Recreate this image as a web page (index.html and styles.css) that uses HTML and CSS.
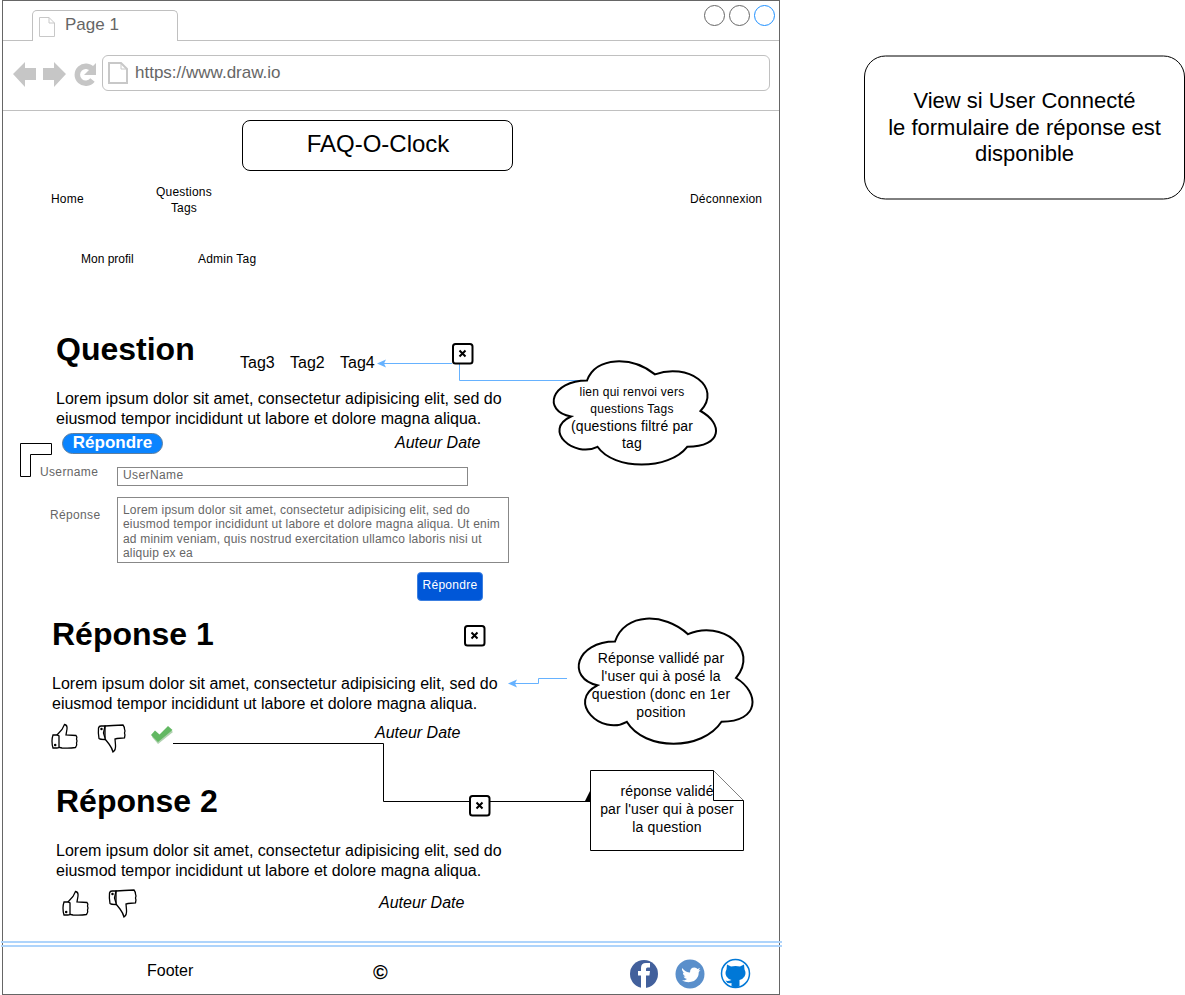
FILE: index.html
```html
<!DOCTYPE html>
<html lang="fr">
<head>
<meta charset="utf-8">
<title>FAQ-O-Clock</title>
<link rel="stylesheet" href="styles.css">
</head>
<body>
<div class="canvas">
  <div class="window">
    <div class="tab-row">
      <div class="tab">
        <svg class="page-icon" width="16" height="20" viewBox="0 0 16 20"><path d="M.5.5H10L15.5 6V19.5H.5Z M10 .5V6H15.5" fill="#fff" stroke="#c8c8c8"/></svg>
        <span class="tab-label">Page 1</span>
      </div>
      <div class="win-buttons">
        <span class="win-btn"></span><span class="win-btn"></span><span class="win-btn win-btn-active"></span>
      </div>
    </div>
    <div class="address-row">
      <svg class="nav-icons" width="99" height="36" viewBox="0 0 99 36">
        <path d="M10 19 22 7V13H33V25H22V32Z" fill="#c6c6c6"/>
        <path d="M63 19 51 7V13H40V25H51V32Z" fill="#c6c6c6"/>
        <path d="M89.5 14.5A8.5 8.5 0 1 0 89.5 25" fill="none" stroke="#c6c6c6" stroke-width="5.5"/>
        <path d="M93 8V20H81Z" fill="#c6c6c6"/>
      </svg>
      <div class="address-bar">
        <svg class="page-icon" width="20" height="22" viewBox="0 0 20 22"><path d="M1 1H13L19 7V21H1Z" fill="#fff" stroke="#c8c8c8" stroke-width="2"/><path d="M13 1V7H19" fill="none" stroke="#c8c8c8"/></svg>
        <span class="address-text">https://www.draw.io</span>
      </div>
    </div>
  </div>

  <svg class="overlay" width="1185" height="995" viewBox="0 0 1185 995">
    <defs>
      <g id="close-box">
        <rect x="1" y="1" width="19.5" height="19.5" rx="2.5" fill="#fff" stroke="#000" stroke-width="2"/>
        <path d="M7.5 7.500 13.500 13.500M13.500 7.500 7.500 13.500" stroke="#000" stroke-width="2"/>
      </g>
      <g id="thumb-up" fill="#fff" stroke="#000" stroke-width="1.3">
        <path d="M7 12 12 6.5 14.5 1.5Q17.5 2 17 6L16 12 26 12.5Q27.5 14 26.5 16 27.5 18 26.5 20 27.5 22 25.5 24.5 20 25.5 12 25L7 24Z"/>
        <path d="M7 12H3Q2 15 2 18 2 22 3 25H7Q9 25 9 24V13Z"/>
        <circle cx="5.2" cy="22" r=".6" fill="#000"/>
      </g>
      <g id="thumb-down" fill="#fff" stroke="#000" stroke-width="1.3">
        <path d="M8 2 16 1.5 26 1Q27.5 3 27.5 5 28.5 7 27.5 9 28.5 11 27.5 14L20 14.5 18 15 18.5 21Q19 26 16 28 15 24 12 20L8 15Z"/>
        <path d="M8 2H4Q2 2 1.5 4 1 9 2 14.5 3 15.5 8 15.5V14L6.5 9Z"/>
        <circle cx="4.5" cy="5" r=".6" fill="#000"/>
      </g>
    </defs>

    <rect class="shape-box" x="242.5" y="120.5" width="270" height="50" rx="7.5"/>
    <rect class="shape-box" x="864.5" y="56" width="320" height="143" rx="21"/>

    <path class="blue-line" d="M452 363.500H384"/>
    <path class="blue-head" d="M377 363.500 386 359.500 384 363.500 386 367.500Z"/>
    <path class="blue-line" d="M459.500 364V380.500H590"/>
    <path class="blue-line" d="M567 678.500H538.500V683.500H515"/>
    <path class="blue-head" d="M508 683.500 517 679.500 515 683.500 517 687.500Z"/>

    <use href="#close-box" x="452" y="343"/>
    <use href="#close-box" x="464" y="625"/>

    <path class="black-line" d="M173 743.500H383.500V801.500H590"/>
    <path d="M585 801 590 791 592 801Z"/>
    <use href="#close-box" x="469" y="795"/>

    <path class="shape-line" d="M20.500 443.500H51.500V454.500H30.500V476.500H20.500Z"/>

    <path class="cloud" d="M587 380.500C551 380.500 542 411 571 416.500C542 430 574 458.500 597.500 446.800C614 470.500 668.800 470.500 687.200 446.800C723 446.800 723 423.200 700.500 411C723 386.600 687.200 362.200 655 374.400C632 356.100 596 356.100 587 380.500Z"/>
    <path class="cloud" d="M615 641.500C575.800 641.500 566 678 597.400 685.300C566 701.400 601.300 736.400 626.800 721.800C644.400 751 702.400 751 721.500 721.800C760 721.800 760 692.600 736 678C760 648.800 721.500 619.600 688 634.200C664 612.300 624.800 612.300 615 641.500Z"/>

    <path class="shape-line" d="M590.500 770.500H713.500L743.500 800.500V850.500H590.500Z"/>
    <path class="shape-line" d="M713.500 770.500V800.500H743.500"/>

    <use href="#thumb-up" x="50" y="723"/>
    <use href="#thumb-down" x="97" y="724"/>
    <use href="#thumb-up" x="61" y="890"/>
    <use href="#thumb-down" x="108" y="889"/>

    <path d="M152 736 158 743 173 731 168.500 727 160 736.500 155 731.500Z" fill="#4f9a4f" opacity=".45" transform="translate(0 1)"/>
    <path d="M151 735 158 742 172.500 730 168 726 159.500 734.500 155 730.500Z" fill="#62b862"/>

    <path class="footer-line" d="M1 942H782M1 946H782"/>

    <circle cx="644" cy="974" r="14" fill="#42609c"/>
    <path d="M641 988V975.500H638V971H641V968Q641 963 646 963H650V967.500H647.500Q646 967.500 646 969V971H650L649.400 975.500H646V988Z" fill="#fff"/>
    <circle cx="690" cy="974" r="14.500" fill="#5a8fcb"/>
    <path d="M682 968Q686 972.500 690 972.500 690 967.500 694.500 967.500 696.500 967.500 697.500 969L700 968 698.500 970.500 700.500 970 698.800 972Q698.800 978 694 981 688 983.500 682 980.500 685 980.500 687 979 684.500 978.500 683.500 976.500H685.500Q682.800 975.300 682.800 972.500L684.500 973Q681.500 971 682 968Z" fill="#fff"/>
    <circle cx="735.500" cy="973.500" r="14" fill="#fff" stroke="#0078d7" stroke-width="1.500"/>
    <path d="M727 964.500 731 966.500Q735.500 965.500 740 966.500L744 964.500 744.500 969.500Q746.500 973 744.500 976.500 742.500 979.500 739.500 980V986.500Q735.500 988 731.500 986.500V983Q727 984 725.500 980.500 727.500 981.500 731.500 980 728.500 979.500 726.500 976.500 724.500 973 726.500 969.500Z" fill="#0078d7"/>
  </svg>

  <div class="node title">FAQ-O-Clock</div>
  <div class="node view-note">View si User Connecté<br>le formulaire de réponse est<br>disponible</div>

  <div class="node nav nav-home">Home</div>
  <div class="node nav nav-questions">Questions<br>Tags</div>
  <div class="node nav nav-logout">Déconnexion</div>
  <div class="node nav nav-profile">Mon profil</div>
  <div class="node nav nav-admin">Admin Tag</div>

  <h1 class="node heading h-question">Question</h1>
  <div class="node tag tag-3">Tag3</div>
  <div class="node tag tag-2">Tag2</div>
  <div class="node tag tag-4">Tag4</div>
  <p class="node lorem lorem-q">Lorem ipsum dolor sit amet, consectetur adipisicing elit, sed do<br>eiusmod tempor incididunt ut labore et dolore magna aliqua.</p>
  <div class="node pill">Répondre</div>
  <div class="node author author-q">Auteur Date</div>

  <div class="node field-label label-user">Username</div>
  <div class="node input">UserName</div>
  <div class="node field-label label-reply">Réponse</div>
  <div class="node textarea">Lorem ipsum dolor sit amet, consectetur adipisicing elit, sed do eiusmod tempor incididunt ut labore et dolore magna aliqua. Ut enim ad minim veniam, quis nostrud exercitation ullamco laboris nisi ut aliquip ex ea</div>
  <div class="node submit">Répondre</div>

  <h2 class="node heading h-r1">Réponse 1</h2>
  <p class="node lorem lorem-r1">Lorem ipsum dolor sit amet, consectetur adipisicing elit, sed do<br>eiusmod tempor incididunt ut labore et dolore magna aliqua.</p>
  <div class="node author author-r1">Auteur Date</div>

  <h2 class="node heading h-r2">Réponse 2</h2>
  <p class="node lorem lorem-r2">Lorem ipsum dolor sit amet, consectetur adipisicing elit, sed do<br>eiusmod tempor incididunt ut labore et dolore magna aliqua.</p>
  <div class="node author author-r2">Auteur Date</div>

  <div class="node cloud-text cloud-text-a"><div class="small">lien qui renvoi vers<br>questions Tags</div>(questions filtré par<br>tag</div>
  <div class="node cloud-text cloud-text-b">Réponse vallidé par<br>l'user qui à posé la<br>question (donc en 1er<br>position</div>
  <div class="node cloud-text note-text">réponse validé<br>par l'user qui à poser<br>la question</div>

  <div class="node footer-text">Footer</div>
  <div class="node copyright">©</div>
</div>
</body>
</html>
```
FILE: styles.css
```css
* { box-sizing: border-box; }
html, body { margin: 0; padding: 0; background: #fff; }
body { font-family: "Liberation Sans", Arial, sans-serif; color: #000; }

.canvas { position: relative; width: 1185px; height: 995px; overflow: hidden; }

.window { margin-left: 2px; width: 778px; height: 995px; border: 1px solid #666; }

.tab-row { display: flex; align-items: flex-end; justify-content: space-between; height: 40px; border-bottom: 1px solid #c0c0c0; padding-left: 29px; }
.tab { display: flex; align-items: flex-start; width: 146px; height: 31px; margin-bottom: -1px; padding: 6px 0 0 6px; background: #fff; border: 1px solid #c0c0c0; border-bottom: none; border-radius: 5px 5px 0 0; }
.tab-label { margin-left: 10px; font-size: 17px; line-height: 16px; color: #666; }
.page-icon { flex: none; }
.win-buttons { display: flex; gap: 4px; align-self: flex-start; margin: 4px 4px 0 0; }
.win-btn { width: 21px; height: 21px; border: 1px solid #666; border-radius: 50%; }
.win-btn-active { border-color: #1e90ff; }

.address-row { display: flex; align-items: flex-start; height: 70px; padding-top: 14px; border-bottom: 1px solid #c0c0c0; }
.nav-icons { flex: none; }
.address-bar { display: flex; align-items: center; width: 668px; height: 36px; padding-left: 5px; border: 1px solid #c0c0c0; border-radius: 6px; }
.address-text { margin-left: 7px; font-size: 17px; color: #666; }

.overlay { position: absolute; left: 0; top: 0; }
.shape-box, .shape-line { fill: #fff; stroke: #000; stroke-width: 1; }
.blue-line { fill: none; stroke: #66b2ff; stroke-width: 1; }
.blue-head { fill: #66b2ff; }
.black-line { fill: none; stroke: #000; stroke-width: 1; }
.footer-line { fill: none; stroke: #aed4fb; stroke-width: 2; }
.cloud { fill: #fff; stroke: #000; stroke-width: 2; }

.node { position: absolute; margin: 0; white-space: nowrap; }

.title { left: 242px; top: 120px; width: 272px; height: 50px; font-size: 24px; line-height: 48px; text-align: center; }
.view-note { left: 864px; top: 88px; width: 321px; font-size: 22px; line-height: 26.500px; text-align: center; }

.nav { font-size: 12px; line-height: 16px; letter-spacing: .2px; }
.nav-home { left: 51px; top: 191px; }
.nav-questions { left: 154px; top: 184px; width: 60px; text-align: center; }
.nav-logout { left: 690px; top: 191px; }
.nav-profile { left: 81px; top: 251px; letter-spacing: 0; }
.nav-admin { left: 198px; top: 251px; }

.heading { font-size: 32px; line-height: 38px; font-weight: 700; }
.h-question { left: 56px; top: 330px; }
.h-r1 { left: 52px; top: 615px; }
.h-r2 { left: 56px; top: 782px; }

.tag { top: 353px; font-size: 16px; line-height: 19px; }
.tag-3 { left: 240px; }
.tag-2 { left: 290px; }
.tag-4 { left: 340px; }

.lorem { font-size: 16px; line-height: 20px; }
.lorem-q { left: 56px; top: 389px; }
.lorem-r1 { left: 52px; top: 674px; }
.lorem-r2 { left: 56px; top: 841px; }

.pill { left: 62px; top: 433px; width: 101px; height: 21px; font-size: 17px; font-weight: 700; line-height: 18px; text-align: center; color: #fff; background: #0a84ff; border: 1px solid #5f7f9f; border-radius: 11px; }

.author { font-size: 16px; line-height: 19px; font-style: italic; }
.author-q { left: 395px; top: 433px; }
.author-r1 { left: 375px; top: 723px; }
.author-r2 { left: 379px; top: 893px; }

.field-label { font-size: 12px; line-height: 14px; color: #666; letter-spacing: .35px; }
.label-user { left: 40px; top: 465px; }
.label-reply { left: 50px; top: 508px; }

.input { left: 117px; top: 467px; width: 351px; height: 19px; padding-left: 5px; font-size: 12px; line-height: 14px; letter-spacing: .4px; color: #666; background: #fff; border: 1px solid #888; }
.textarea { left: 117px; top: 497px; width: 392px; height: 66px; padding: 5px 5px 0; font-size: 12px; line-height: 14.300px; letter-spacing: .2px; color: #666; white-space: normal; background: #fff; border: 1px solid #888; }
.submit { left: 417px; top: 572px; width: 66px; height: 29px; font-size: 12px; line-height: 24px; letter-spacing: .3px; text-align: center; color: #fff; background: #0057d8; border: 1px solid #3c7fe0; border-radius: 4px; }

.cloud-text { font-size: 14px; line-height: 18px; letter-spacing: .15px; text-align: center; }
.cloud-text-a { left: 552px; top: 384px; width: 160px; line-height: 17px; }
.small { font-size: 12px; letter-spacing: .25px; }
.cloud-text-b { left: 571px; top: 649px; width: 180px; }
.note-text { left: 590px; top: 782px; width: 154px; }

.footer-text { left: 147px; top: 961px; font-size: 16px; line-height: 19px; }
.copyright { left: 373px; top: 961px; font-size: 20px; line-height: 23px; font-weight: 700; }
```
